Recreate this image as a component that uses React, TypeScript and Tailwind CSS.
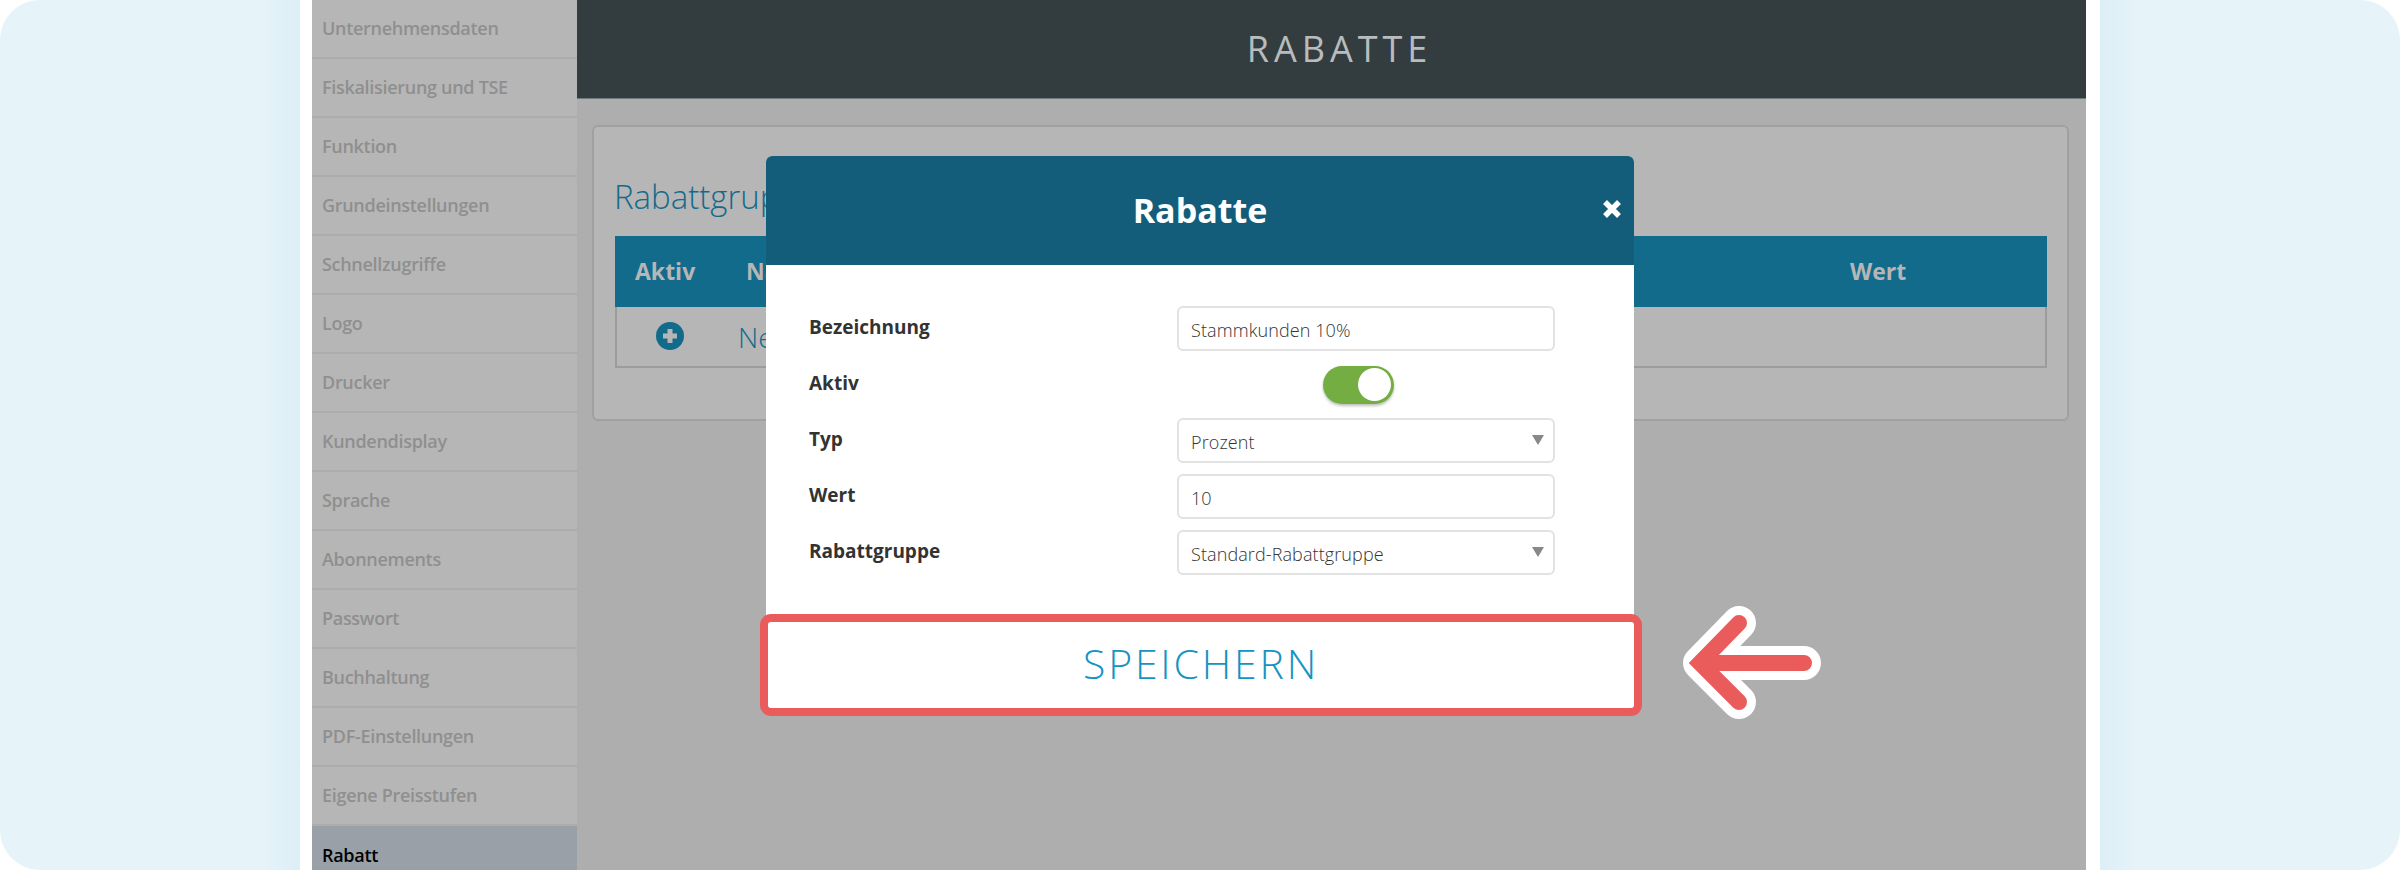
import React from "react";

const menu = [
  "Unternehmensdaten",
  "Fiskalisierung und TSE",
  "Funktion",
  "Grundeinstellungen",
  "Schnellzugriffe",
  "Logo",
  "Drucker",
  "Kundendisplay",
  "Sprache",
  "Abonnements",
  "Passwort",
  "Buchhaltung",
  "PDF-Einstellungen",
  "Eigene Preisstufen",
];

function Field({ label, children }: { label: string; children: React.ReactNode }) {
  return (
    <div className="flex items-center h-[45px]">
      <span className="w-[368px] text-[19px] font-bold text-[#333] -mt-[2px]">{label}</span>
      <div className="w-[378px] flex justify-center">{children}</div>
    </div>
  );
}

function Box({ text, select }: { text: string; select?: boolean }) {
  return (
    <div className="w-[378px] h-[45px] border-2 border-[#e2e2e2] rounded-[6px] flex items-center justify-between pl-[12px] pr-[9px] pt-[3px] text-[18px] tracking-[0.1px] text-[#333] font-light">
      <span>{text}</span>
      {select && <span className="w-0 h-0 border-x-[6px] border-x-transparent border-t-[10px] border-t-[#888] -mt-[5px]" />}
    </div>
  );
}

function Modal() {
  return (
    <div className="absolute left-[766px] top-[156px] w-[868px] bg-white rounded-t-[6px]">
      <div className="relative h-[109px] bg-[#135d7a] rounded-t-[6px] flex items-center justify-center text-white text-[34px] font-bold">
        <span>Rabatte</span>
        <span className="absolute right-[12px] top-[43px]">
          <svg width="20" height="20" viewBox="0 0 20 20">
            <path d="M3 3 L17 17 M17 3 L3 17" stroke="#fff" strokeWidth="5.5" />
          </svg>
        </span>
      </div>
      <div className="pl-[43px] pt-[41px] h-[357px] flex flex-col gap-[11px]">
        <Field label="Bezeichnung"><Box text="Stammkunden 10%" /></Field>
        <Field label="Aktiv">
          <div className="w-[71px] h-[38px] -ml-[15px] rounded-full bg-[#74ad42] shadow-[0_2px_3px_rgba(0,0,0,0.25)] flex items-center justify-end pr-[3px]">
            <div className="w-[33px] h-[33px] rounded-full bg-white" />
          </div>
        </Field>
        <Field label="Typ"><Box text="Prozent" select /></Field>
        <Field label="Wert"><Box text="10" /></Field>
        <Field label="Rabattgruppe"><Box text="Standard-Rabattgruppe" select /></Field>
      </div>
      <div className="h-[86px] ml-[2px] pb-[3px] flex items-center justify-center bg-white rounded-[3px] outline-8 outline-[#ea5c5c] text-[41px] font-light tracking-[2.8px] text-[#1593c1]">
        SPEICHERN
      </div>
    </div>
  );
}

function Arrow() {
  return (
    <svg className="absolute left-[1670px] top-[595px]" width="170" height="136" viewBox="0 0 170 136">
      <path d="M69 28 L30 68 L69 107 M30 68 H134" fill="none" stroke="#fff" strokeWidth="34" strokeLinecap="round" strokeLinejoin="round" />
      <path d="M69 28 L30 68 L69 107 M30 68 H134" fill="none" stroke="#ea5c5c" strokeWidth="16" strokeLinecap="round" strokeLinejoin="miter" />
    </svg>
  );
}

export default function App() {
  return (
    <div className="relative w-[2400px] h-[870px] overflow-hidden bg-white flex font-['Open_Sans',sans-serif]">
      <div className="w-[300px] h-full rounded-l-[40px] bg-gradient-to-r from-[#e6f3f9] from-[88%] to-[#dceef6]" />
      <div className="w-[1800px] h-full bg-white px-[12px] flex">
        <div className="w-[265px] shrink-0 bg-[#b6b6b6] flex flex-col">
          {menu.map((m) => (
            <div key={m} className="h-[59px] shrink-0 border-b-2 border-[#acacac] pl-[10px] flex items-center text-[18px] text-[#8f8f8f] font-semibold tracking-[-0.3px]">
              {m}
            </div>
          ))}
          <div className="flex-1 bg-[#9aa0a8] pl-[10px] pt-[16px] text-[18px] font-semibold tracking-[-0.3px] text-black">Rabatt</div>
        </div>
        <div className="w-[1509px] bg-[#aeaeae]">
          <div className="h-[99px] pl-[16px] bg-[#333d40] border-b border-[#6f7a7c] flex items-center justify-center text-[36px] font-normal tracking-[5px] text-[#b9bcbc]">
            RABATTE
          </div>
          <div className="ml-[15px] mt-[26px] w-[1477px] h-[296px] bg-[#b6b6b6] border-2 border-[#a0a0a0] rounded-[6px] pl-[21px] pt-[46px]">
            <div className="-ml-[1px] text-[33px] font-light text-[#136b8c] leading-[48px]">Rabattgruppen</div>
            <div className="mt-[15px] w-[1432px]">
              <div className="h-[71px] bg-[#136b8c] grid grid-cols-[131px_1fr_197px] items-center text-[23px] font-bold text-[#b6b6b6]">
                <span className="pl-[20px]">Aktiv</span>
                <span>Name</span>
                <span>Wert</span>
              </div>
              <div className="h-[61px] border-2 border-t-0 border-[#9c9c9c] flex items-center">
                <span className="ml-[39px] -mt-[2px] w-[28px] h-[28px] rounded-full bg-[#136b8c] flex items-center justify-center">
                  <svg width="18" height="18" viewBox="0 0 18 18"><path d="M9 2 V16 M2 9 H16" stroke="#b6b6b6" strokeWidth="5" /></svg>
                </span>
                <span className="ml-[54px] text-[28px] font-light text-[#136b8c]">Neu</span>
              </div>
            </div>
          </div>
        </div>
        <div className="flex-1" />
      </div>
      <div className="w-[300px] h-full rounded-r-[40px] bg-gradient-to-l from-[#e6f3f9] from-[88%] to-[#dceef6]" />
      <Modal />
      <Arrow />
    </div>
  );
}
